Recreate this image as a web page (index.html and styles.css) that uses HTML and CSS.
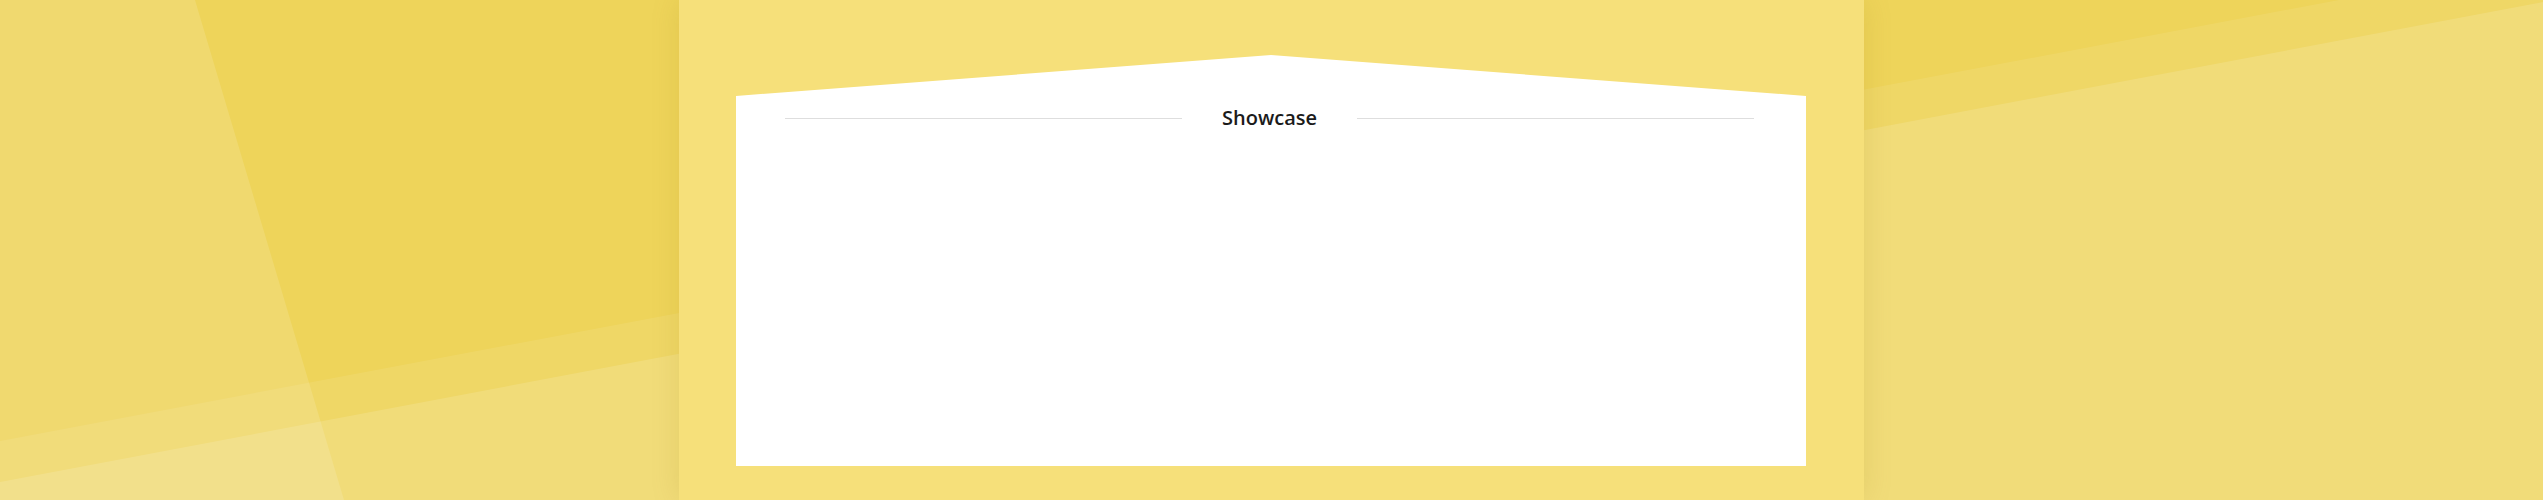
FILE: index.html
```html
<!DOCTYPE html>
<html lang="en">
<head>
<meta charset="utf-8">
<title>Showcase</title>
<link rel="stylesheet" href="styles.css">
</head>
<body>
<svg class="backdrop" viewBox="0 0 2543 500" preserveAspectRatio="none" aria-hidden="true">
  <rect x="0" y="0" width="2543" height="500" fill="#eed45a"/>
  <polygon points="0,0 195,0 344,500 0,500" fill="#ffffff" fill-opacity="0.13"/>
  <polygon points="0,441 2339,0 2543,0 2543,500 0,500" fill="#ffffff" fill-opacity="0.08"/>
  <polygon points="0,482 2543,2 2543,500 0,500" fill="#ffffff" fill-opacity="0.13"/>
</svg>
<main class="panel">
  <section class="card">
    <header class="card-head">
      <span class="rule"></span>
      <h2 class="card-title">Showcase</h2>
      <span class="rule"></span>
    </header>
  </section>
</main>
</body>
</html>
```
FILE: styles.css
```css
html, body {
  margin: 0;
  padding: 0;
}

body {
  position: relative;
  height: 500px;
  overflow: hidden;
  background: #eed45a;
  font-family: "Open Sans", "Noto Sans", "Liberation Sans", sans-serif;
}

.backdrop {
  position: absolute;
  top: 0;
  left: 0;
  width: 100%;
  height: 100%;
  display: block;
}

.panel {
  position: relative;
  box-sizing: border-box;
  width: 1185px;
  height: 500px;
  margin: 0 auto;
  padding: 55px 58px 34px 57px;
  background: #f6e07a;
  box-shadow: 0 0 28px rgba(150, 110, 0, 0.14);
}

.card {
  box-sizing: border-box;
  height: 411px;
  padding: 49px 52px 0 49px;
  background: #ffffff;
  clip-path: polygon(0 41px, 50% 0, 100% 41px, 100% 100%, 0 100%);
}

.card-head {
  display: flex;
  align-items: center;
  gap: 40px;
  height: 28px;
}

.rule {
  flex: 1;
  height: 1px;
  background: #dedede;
}

.card-title {
  margin: 0;
  font-size: 20px;
  line-height: 28px;
  font-weight: 600;
  color: #1b1b1b;
}
```
